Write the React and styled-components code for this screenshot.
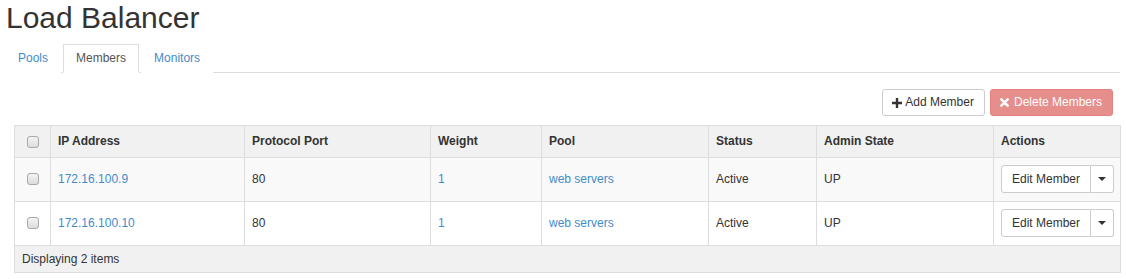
import React from "react";
import styled, { createGlobalStyle } from "styled-components";

const GlobalStyle = createGlobalStyle`
  body {
    margin: 0;
    font-family: "Liberation Sans", Arial, sans-serif;
    font-size: 12px;
    color: #333;
    background: #fff;
  }
`;

const Page = styled.div`
  padding: 0 6px 0 5px;
`;

const Title = styled.h1`
  margin: 0 0 8px 1px;
  font-size: 30px;
  font-weight: 400;
  line-height: 36px;
  color: #333;
`;

const Tabs = styled.ul`
  display: flex;
  margin: 0;
  padding: 0;
  list-style: none;
  border-bottom: 1px solid #ddd;
`;

const Tab = styled.li`
  margin: 0 2px -1px 0;
  padding: 5px 12px;
  line-height: 17px;
  border: 1px solid ${(p) => (p.$active ? "#ddd" : "transparent")};
  border-bottom-color: ${(p) => (p.$active ? "#fff" : "transparent")};
  background: #fff;
  color: ${(p) => (p.$active ? "#555" : "#428bca")};
  cursor: pointer;
`;

const Toolbar = styled.div`
  display: flex;
  justify-content: flex-end;
  gap: 5px;
  margin-top: 16px;
  padding-right: 7px;
`;

const Button = styled.button`
  display: inline-flex;
  align-items: center;
  gap: ${(p) => (p.$danger ? "5px" : "3px")};
  padding: 4px 10px 4px 9px;
  font: inherit;
  line-height: 17px;
  white-space: nowrap;
  border-radius: 3px;
  border: 1px solid ${(p) => (p.$danger ? "#d43f3a" : "#ccc")};
  background: ${(p) => (p.$danger ? "#d9534f" : "#fff")};
  color: ${(p) => (p.$danger ? "#fff" : "#333")};
  opacity: ${(p) => (p.$danger ? 0.65 : 1)};
`;

const Table = styled.table`
  margin: 9px 0 0 9px;
  width: 1106px;
  table-layout: fixed;
  border-collapse: collapse;
  border: 1px solid #ddd;
`;

const Th = styled.th`
  padding: 7px 7px;
  line-height: 17px;
  text-align: ${(p) => (p.$center ? "center" : "left")};
  font-weight: 700;
  background: #f1f1f1;
  border: 1px solid #ddd;
`;

const Row = styled.tr`
  background: ${(p) => (p.$striped ? "#f9f9f9" : "#fff")};
`;

const Td = styled.td`
  padding: 7px 7px 8px;
  line-height: 17px;
  vertical-align: middle;
  white-space: nowrap;
  text-align: ${(p) => (p.$center ? "center" : "left")};
  border: 1px solid #ddd;
`;

const FooterCell = styled.td`
  padding: 5px 7px;
  line-height: 16px;
  background: #f1f1f1;
  border: 1px solid #ddd;
`;

const Link = styled.a`
  color: #428bca;
  text-decoration: none;
`;

const Check = styled.input.attrs({ type: "checkbox" })`
  appearance: none;
  display: block;
  margin: 0 auto;
  width: 12px;
  height: 12px;
  border: 1px solid #a9a9a9;
  border-radius: 3px;
  background: linear-gradient(#f4f4f4, #dcdcdc);
`;

const SplitButton = styled.div`
  display: inline-flex;
  vertical-align: middle;
`;

const SplitMain = styled.button`
  padding: 5px 10px;
  font: inherit;
  line-height: 16px;
  white-space: nowrap;
  color: #333;
  background: #fff;
  border: 1px solid #ccc;
  border-radius: 3px 0 0 3px;
`;

const SplitCaret = styled.button`
  display: flex;
  align-items: center;
  justify-content: center;
  width: 23px;
  padding: 0;
  background: #fff;
  border: 1px solid #ccc;
  border-left: none;
  border-radius: 0 3px 3px 0;

  &::after {
    content: "";
    border-top: 4px solid #333;
    border-left: 4px solid transparent;
    border-right: 4px solid transparent;
  }
`;

const PlusIcon = () => (
  <svg width="10" height="10" viewBox="0 0 10 10">
    <path d="M3.8 0h2.4v3.8H10v2.4H6.2V10H3.8V6.2H0V3.8h3.8z" fill="#333" />
  </svg>
);

const TimesIcon = () => (
  <svg width="9" height="9" viewBox="0 0 10 10">
    <path d="M1.5 1.5l7 7M8.5 1.5l-7 7" stroke="#fff" strokeWidth="2.8" strokeLinecap="round" />
  </svg>
);

const columns = [
  { label: "IP Address", width: 194 },
  { label: "Protocol Port", width: 186 },
  { label: "Weight", width: 111 },
  { label: "Pool", width: 167 },
  { label: "Status", width: 108 },
  { label: "Admin State", width: 177 },
  { label: "Actions", width: 127 },
];

const members = [
  { ip: "172.16.100.9", port: 80, weight: 1, pool: "web servers", status: "Active", admin: "UP" },
  { ip: "172.16.100.10", port: 80, weight: 1, pool: "web servers", status: "Active", admin: "UP" },
];

export default function App() {
  return (
    <Page>
      <GlobalStyle />
      <Title>Load Balancer</Title>
      <Tabs>
        <Tab>Pools</Tab>
        <Tab $active>Members</Tab>
        <Tab>Monitors</Tab>
      </Tabs>
      <Toolbar>
        <Button>
          <PlusIcon /> Add Member
        </Button>
        <Button $danger>
          <TimesIcon /> Delete Members
        </Button>
      </Toolbar>
      <Table>
        <colgroup>
          <col style={{ width: 36 }} />
          {columns.map((c) => (
            <col key={c.label} style={{ width: c.width }} />
          ))}
        </colgroup>
        <thead>
          <tr>
            <Th $center>
              <Check />
            </Th>
            {columns.map((c) => (
              <Th key={c.label}>{c.label}</Th>
            ))}
          </tr>
        </thead>
        <tbody>
          {members.map((m, i) => (
            <Row key={m.ip} $striped={i % 2 === 0}>
              <Td $center>
                <Check />
              </Td>
              <Td>
                <Link href="#">{m.ip}</Link>
              </Td>
              <Td>{m.port}</Td>
              <Td>
                <Link href="#">{m.weight}</Link>
              </Td>
              <Td>
                <Link href="#">{m.pool}</Link>
              </Td>
              <Td>{m.status}</Td>
              <Td>{m.admin}</Td>
              <Td>
                <SplitButton>
                  <SplitMain>Edit Member</SplitMain>
                  <SplitCaret />
                </SplitButton>
              </Td>
            </Row>
          ))}
        </tbody>
        <tfoot>
          <tr>
            <FooterCell colSpan={8}>Displaying 2 items</FooterCell>
          </tr>
        </tfoot>
      </Table>
    </Page>
  );
}
